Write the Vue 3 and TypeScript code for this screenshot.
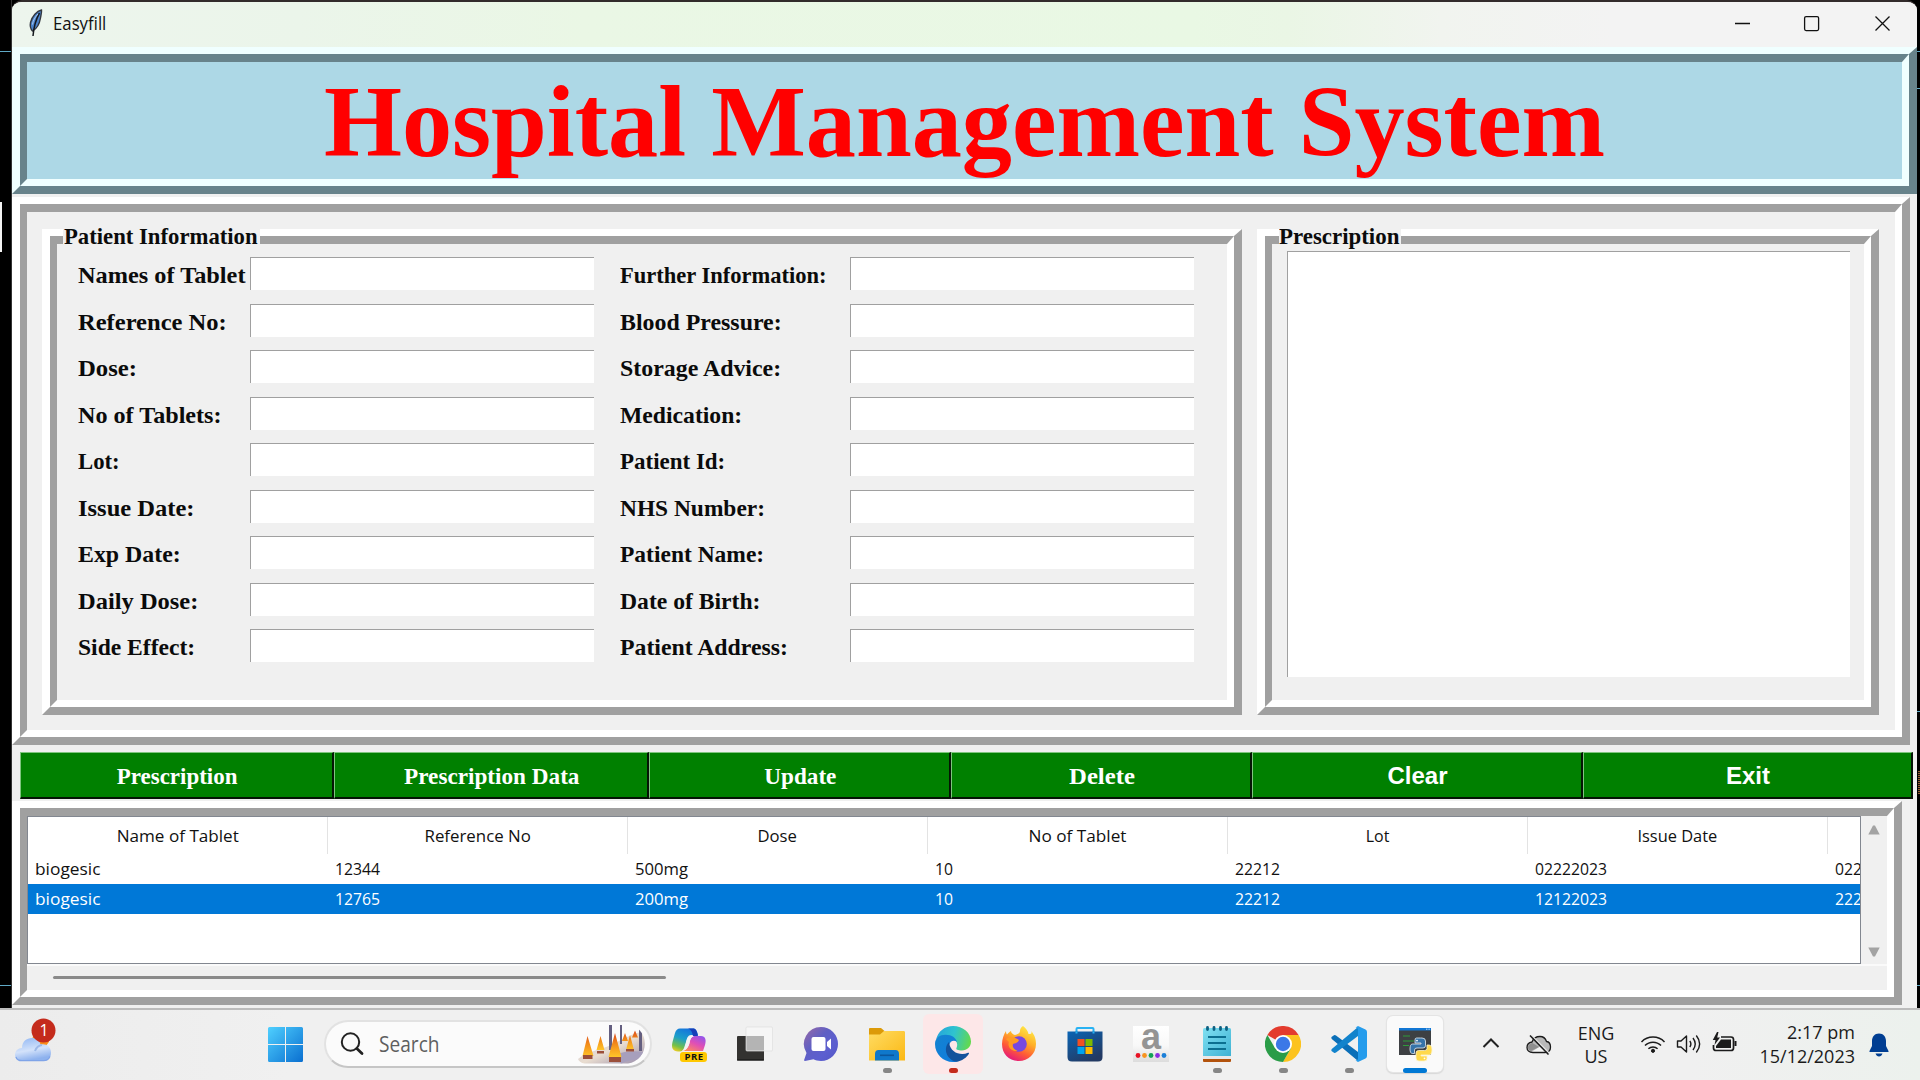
<script setup lang="ts">
interface Caption {
  text: string
  stretch: number
}

interface FieldPair {
  left: Caption
  right: Caption
}

interface ActionButton {
  label: string
  width: number
  stretch: number
  sans?: boolean
}

const fields: FieldPair[] = [
  { left: { text: 'Names of Tablet', stretch: 1.013 }, right: { text: 'Further Information:', stretch: 0.938 } },
  { left: { text: 'Reference No:', stretch: 1.022 }, right: { text: 'Blood Pressure:', stretch: 0.995 } },
  { left: { text: 'Dose:', stretch: 1.03 }, right: { text: 'Storage Advice:', stretch: 0.995 } },
  { left: { text: 'No of Tablets:', stretch: 1.006 }, right: { text: 'Medication:', stretch: 0.986 } },
  { left: { text: 'Lot:', stretch: 0.946 }, right: { text: 'Patient Id:', stretch: 0.957 } },
  { left: { text: 'Issue Date:', stretch: 1.022 }, right: { text: 'NHS Number:', stretch: 0.975 } },
  { left: { text: 'Exp Date:', stretch: 0.994 }, right: { text: 'Patient Name:', stretch: 0.979 } },
  { left: { text: 'Daily Dose:', stretch: 1.02 }, right: { text: 'Date of Birth:', stretch: 0.985 } },
  { left: { text: 'Side Effect:', stretch: 0.982 }, right: { text: 'Patient Address:', stretch: 0.99 } },
]

const buttons: ActionButton[] = [
  { label: 'Prescription', width: 314, stretch: 0.956 },
  { label: 'Prescription Data', width: 315, stretch: 0.966 },
  { label: 'Update', width: 302, stretch: 0.966 },
  { label: 'Delete', width: 301, stretch: 1.03 },
  { label: 'Clear', width: 331, stretch: 1, sans: true },
  { label: 'Exit', width: 330, stretch: 1, sans: true },
]

const columns: Caption[] = [
  { text: 'Name of Tablet', stretch: 1.006 },
  { text: 'Reference No', stretch: 0.99 },
  { text: 'Dose', stretch: 0.98 },
  { text: 'No of Tablet', stretch: 1.01 },
  { text: 'Lot', stretch: 0.94 },
  { text: 'Issue Date', stretch: 0.965 },
  { text: '', stretch: 1 },
]

const rows: string[][] = [
  ['biogesic', '12344', '500mg', '10', '22212', '02222023', '022'],
  ['biogesic', '12765', '200mg', '10', '22212', '12122023', '222'],
]
const selectedRow = 1

// Digits sit tighter than letters in the table font.
function cellStretch(value: string): number {
  if (/^[a-z]/.test(value)) return 1.02
  return /[a-z]/.test(value) ? 0.98 : 0.926
}

function stretched(factor: number): { transform: string } {
  return { transform: `scaleX(${factor})` }
}
</script>

<template>
  <div class="desktop">
    <div class="workspace">
      <div class="strip strip-left">
        <i class="wire wire-a"></i>
        <i class="wire wire-d"></i>
        <i class="chip"></i>
      </div>

      <div class="window">
        <header class="titlebar">
          <svg class="feather" width="16" height="30" viewBox="0 0 16 30">
            <path d="M13.500 2C9 3 4 8 2.500 14.500C1.800 18 2.500 21 4.500 23C8.500 21 11.500 16 12.500 10C13.200 6 13.800 4 13.500 2Z" fill="#4a82cb" stroke="#33373f" stroke-width="1.400" />
            <path d="M11.500 5C8 11 6 17 5 28" fill="none" stroke="#15181d" stroke-width="1.500" />
            <path d="M10 6C7 9 5 12.500 4.500 16.500" fill="none" stroke="#a9c9f0" stroke-width="1" />
          </svg>
          <span class="caption">Easyfill</span>
          <div class="controls">
            <svg width="160" height="20" viewBox="0 0 160 20" fill="none" stroke="#111" stroke-width="1.300">
              <path d="M3 9.500H18" />
              <rect x="72.600" y="2.600" width="14" height="14" rx="1.500" />
              <path d="M143.500 2.500L157.500 16.500M157.500 2.500L143.500 16.500" />
            </svg>
          </div>
        </header>

        <div class="ridge banner">
          <div class="groove"><h1>Hospital Management System</h1></div>
        </div>

        <div class="ridge data">
          <div class="groove data-body">
            <section class="ridge patient">
              <span class="legend legend-patient"><b>Patient Information</b></span>
              <div class="groove form">
                <template v-for="f in fields" :key="f.left.text">
                  <label :style="stretched(f.left.stretch)">{{ f.left.text }}</label>
                  <div class="entry"></div>
                  <label class="second" :style="stretched(f.right.stretch)">{{ f.right.text }}</label>
                  <div class="entry"></div>
                </template>
              </div>
            </section>

            <section class="ridge prescription">
              <span class="legend legend-rx"><b>Prescription</b></span>
              <div class="groove rx-body"><div class="entry textarea"></div></div>
            </section>
          </div>
        </div>

        <div class="actions">
          <button v-for="b in buttons" :key="b.label" :class="{ sans: b.sans }" :style="{ width: b.width + 'px' }">
            <span :style="stretched(b.stretch)">{{ b.label }}</span>
          </button>
        </div>

        <div class="ridge details">
          <div class="groove details-body">
            <div class="upper">
              <div class="tree">
                <div class="tree-row head">
                  <div v-for="(c, i) in columns" :key="i" class="cell"><span :style="stretched(c.stretch)">{{ c.text }}</span></div>
                </div>
                <div v-for="(r, i) in rows" :key="i" class="tree-row" :class="{ selected: i === selectedRow }">
                  <div v-for="(c, j) in r" :key="j" class="cell"><span :style="stretched(cellStretch(c))">{{ c }}</span></div>
                </div>
              </div>
              <div class="vscroll">
                <svg width="12" height="10" viewBox="0 0 12 10"><path d="M5 .5h2L11.700 9.500H.3Z" fill="#a3a3a3" /></svg>
                <svg width="12" height="10" viewBox="0 0 12 10"><path d="M.3.5h11.400L7 9.500H5Z" fill="#a3a3a3" /></svg>
              </div>
            </div>
            <div class="hscroll"><div class="thumb"></div></div>
          </div>
        </div>
      </div>

      <div class="strip strip-right">
        <i class="wire wire-a"></i>
        <i class="wire wire-b"></i>
        <i class="wire wire-c"></i>
        <i class="wire wire-d"></i>
        <i class="dots"></i>
      </div>
    </div>

    <footer class="taskbar">
      <div class="weather">
        <svg width="44" height="48" viewBox="0 0 44 48">
          <defs>
            <linearGradient id="cloud" x1="0" y1="0" x2="0.3" y2="1">
              <stop offset="0" stop-color="#8fb6f3" /><stop offset=".6" stop-color="#d3e2fa" /><stop offset="1" stop-color="#8eb2ee" />
            </linearGradient>
          </defs>
          <circle cx="27" cy="20.500" r="8.500" fill="#fb8c17" />
          <path d="M8 50.500C3.500 50.500 1 48 1 44.500C1 40.500 4 37.500 8 37.500C8 31 12.500 27.500 18 27.500C22.500 27.500 25.500 30 26.500 34C32 32.500 37 36 37 42C37 47 34 50.500 29.500 50.500Z" transform="translate(0 -7.500)" fill="url(#cloud)" />
          <path d="M2 39Q3 42.700 8 42.700H29.500Q34 42.700 36 38.500" fill="none" stroke="#7fa4e8" stroke-width="1.200" />
          <path d="M21 33Q23 27.500 28 27" fill="none" stroke="#9db9e9" stroke-width="2" />
          <circle cx="29.500" cy="12.500" r="12" fill="#c42b1c" />
        </svg>
        <span class="badge">1</span>
      </div>

      <svg class="start" width="35" height="35" viewBox="0 0 35 35">
        <defs>
          <linearGradient id="win" x1="0" y1="0" x2="1" y2="1">
            <stop offset="0" stop-color="#4fd0ff" /><stop offset="1" stop-color="#0a6fd0" />
          </linearGradient>
        </defs>
        <path d="M1.500 0H17V17H0V1.500Q0 0 1.500 0ZM18 0H33.500Q35 0 35 1.500V17H18ZM0 18H17V35H1.500Q0 35 0 33.500ZM18 18H35V33.500Q35 35 33.500 35H18Z" fill="url(#win)" />
      </svg>

      <div class="search">
        <svg class="lens" width="26" height="26" viewBox="0 0 26 26" fill="none" stroke="#222" stroke-linecap="round">
          <circle cx="11.500" cy="11" r="8.700" stroke-width="2" /><path d="M17.800 17.500L23 22.500" stroke-width="2.800" />
        </svg>
        <span class="placeholder">Search</span>
        <svg class="art" width="74" height="42" viewBox="0 0 74 42">
          <defs>
            <linearGradient id="flame" x1="0" y1="0" x2="0" y2="1">
              <stop offset="0" stop-color="#d9481c" /><stop offset=".45" stop-color="#f28a1a" /><stop offset="1" stop-color="#ffc629" />
            </linearGradient>
            <linearGradient id="snow" x1="0" y1="0" x2="1" y2="1">
              <stop offset="0" stop-color="#c6c0d6" /><stop offset=".5" stop-color="#e9ddd0" /><stop offset="1" stop-color="#8a7fa3" />
            </linearGradient>
            <clipPath id="pill"><path d="M0 1H52A20 20 0 0 1 52 40.500H0Z" /></clipPath>
          </defs>
          <g clip-path="url(#pill)">
            <path d="M2 36C12 28 24 27 35 22C48 16 60 8 74 8V42H16C8 42 3 39 2 36Z" fill="url(#snow)" />
            <path d="M40 31Q56 26 73 30V37Q55 35 45 41Z" fill="#a79fbc" />
            <path d="M33 2h3v25h-3zM44 2h2v19h-2zM63 5h3v23h-3zM69 10h2v10h-2z" fill="#645f80" />
            <path d="M49 10l3 8h-6zM59 7.500l3 7h-6zM54 12l4 15h-8zM24.500 13l4 14h-8z" fill="url(#flame)" />
            <path d="M11.500 13l6 20h-11zM39 10l6.500 24h-13z" fill="url(#flame)" />
            <path d="M7 32h9.500v4H7zM33 34h12v5H33zM21 28h7v2.500h-7zM50 26h8v2.500h-8z" fill="#9b4f3a" />
          </g>
        </svg>
      </div>

      <nav class="apps">
        <div class="app">
          <svg viewBox="0 0 36 36">
            <defs>
              <linearGradient id="copA" x1="0.600" y1="0" x2="0.200" y2="1"><stop offset="0" stop-color="#1573dd" /><stop offset=".45" stop-color="#1b9fc9" /><stop offset=".8" stop-color="#75c047" /><stop offset="1" stop-color="#e8cc24" /></linearGradient>
              <linearGradient id="copB" x1="0.900" y1="0" x2="0.200" y2="1"><stop offset="0" stop-color="#8d55ef" /><stop offset=".5" stop-color="#e04fb5" /><stop offset="1" stop-color="#ff8d5b" /></linearGradient>
            </defs>
            <path d="M9 2.500H22C25 2.500 26 5 27 9H20C17 9 16 12 15 16L13 22C12 25 10 25.500 7 25.500C2 25.500 0 22 1.500 16L4 7C5 4 6.500 2.500 9 2.500Z" fill="url(#copA)" />
            <path d="M19 2.500H22C25 2.500 26 5 27 10H22C21 6 20.500 4 17 2.500Z" fill="#163fb8" />
            <path d="M24 10H30C34.500 10 35.500 14 34 19L32 25H11C15 25 17.500 21 18.500 17C19.500 12 21 10 24 10Z" fill="url(#copB)" />
            <path d="M20 10H24C21 10 19.500 12 18.500 17C17.500 21 15 25 11 25C13.500 24 14 21 15 17C16 13 17 10 20 10Z" fill="#f3f3f3" />
            <rect x="9" y="26" width="27" height="10" rx="3" fill="#ffc800" />
          </svg>
          <span class="pre">PRE</span>
        </div>
        <div class="app">
          <svg viewBox="0 0 36 36"><rect x="0" y="10" width="27" height="24.500" rx="1" fill="#333230" /><rect x="9" y="1" width="26.500" height="24" rx="1" fill="#f6f6f6" stroke="#dedede" stroke-width=".7" /><path d="M9.400 10H27V24.600H9.400Z" fill="#b4b4b4" /><path d="M0 34H27" stroke="#111" /></svg>
        </div>
        <div class="app">
          <svg viewBox="0 0 36 36">
            <defs><linearGradient id="chat" x1="0" y1="0" x2="1" y2="1"><stop offset="0" stop-color="#9a6aa5" /><stop offset=".4" stop-color="#5f5fc4" /><stop offset=".7" stop-color="#5c5fd0" /><stop offset="1" stop-color="#5355c3" /></linearGradient></defs>
            <path d="M18 1A17 17 0 0 1 18 35C15 35 12.500 34.300 10.500 33.300L2 35Q.8 35 1.200 33.700L3.500 27A17 17 0 0 1 18 1Z" fill="url(#chat)" />
            <rect x="8.500" y="11" width="14" height="14" rx="2" fill="#fff" /><path d="M24 16L28 12.500V23.500L24 20Z" fill="#fff" />
          </svg>
        </div>
        <div class="app">
          <svg viewBox="0 0 36 36">
            <defs><linearGradient id="fold" x1="0" y1="0" x2="1" y2="1"><stop offset="0" stop-color="#ffdc63" /><stop offset="1" stop-color="#fbb814" /></linearGradient></defs>
            <path d="M0 3Q0 2 1 2H12L15.500 5H20V12H0Z" fill="#dc9a08" />
            <path d="M0 8.500H11L15 5H34.500Q36 5 36 6.200V34.500H0Z" fill="url(#fold)" />
            <path d="M6 34.500V28Q6 24 9.500 24H26.500Q30 24 30 28V34.500Z" fill="#0f78cb" /><path d="M11 29.300H25" stroke="#0b569d" stroke-width="1.600" />
          </svg>
          <i class="dot"></i>
        </div>
        <div class="app attention">
          <svg viewBox="0 0 36 36">
            <defs>
              <linearGradient id="edgeA" x1="0" y1="0.300" x2="1" y2="0.500"><stop offset="0" stop-color="#25a5dc" /><stop offset=".5" stop-color="#2fc3cf" /><stop offset="1" stop-color="#62d94f" /></linearGradient>
              <linearGradient id="edgeB" x1="0" y1="0" x2="1" y2="1"><stop offset="0" stop-color="#1583cf" /><stop offset="1" stop-color="#0d7be0" /></linearGradient>
            </defs>
            <path d="M1 14C3 5 10 0 18 0C28 0 36 7 36 15.500C36 21 32 24.500 27 24.500C23 24.500 20.500 23.500 21.500 22C24 17 20 11 12 10C7 9.500 3 11 1 14Z" fill="url(#edgeA)" />
            <path d="M0 18C0 12 5 8.800 10.500 8.800C17 8.800 21 12 22 16C19 13.500 15 15 14.300 19C13.500 27 20 33 25 34.500C22 36 20 36 18 36C8 36 0 28 0 18Z" fill="url(#edgeB)" />
            <path d="M14 16C8 22 11 33 21 35.800C27 35 32 31.500 34 27.500C34.300 26.700 33.500 26.500 33 26.800C26 30 15 27 14 16Z" fill="#13529c" />
          </svg>
          <i class="dot red"></i>
        </div>
        <div class="app">
          <svg viewBox="0 0 36 36">
            <defs><linearGradient id="fox" x1="0.800" y1="0" x2="0.300" y2="1"><stop offset="0" stop-color="#fff04a" /><stop offset=".4" stop-color="#ffae27" /><stop offset=".7" stop-color="#ff5b36" /><stop offset="1" stop-color="#e3167f" /></linearGradient></defs>
            <path d="M22 0C25 2 27 5 27.500 8C31 8 31 7 30 5C34 9 35 14 35 18C35 28 27 35 18 35C8 35 1 28 1 18C1 13 3 8 5 5C5 7 5.500 8 6 8.500C7 7 9 5.500 10 5C10 7 12 8.500 14 9C17 8 19 7 19 5C19 3 20 1 22 0Z" fill="url(#fox)" />
            <circle cx="18" cy="18" r="7.800" fill="#7748e0" />
            <path d="M5 13C9 10 14 11 18 14C17 17 14 17 12 18C11 21 13 24 17 25C10 26 6 20 8 16Z" fill="#ff9b23" />
          </svg>
        </div>
        <div class="app">
          <svg viewBox="0 0 36 36">
            <defs><linearGradient id="store" x1="0" y1="0" x2="0.600" y2="1"><stop offset="0" stop-color="#0a65b5" /><stop offset="1" stop-color="#233a63" /></linearGradient></defs>
            <path d="M9.500 8V3Q9.500 2 10.500 2H25.500Q26.500 2 26.500 3V8" fill="none" stroke="#28b2f3" stroke-width="2" />
            <path d="M.5 5.500H35.500V31Q35.500 35.500 31 35.500H5Q.5 35.500 .5 31Z" fill="url(#store)" />
            <path d="M9.500 7.500V5.500M26.500 7.500V5.500" stroke="#28b2f3" stroke-width="2" />
            <path d="M10.500 13h7v7h-7z" fill="#f25022" /><path d="M18.500 13h7v7h-7z" fill="#7fba00" /><path d="M10.500 21h7v7h-7z" fill="#00a4ef" /><path d="M18.500 21h7v7h-7z" fill="#ffb900" />
          </svg>
        </div>
        <div class="app">
          <svg viewBox="0 0 36 36">
            <defs><linearGradient id="pad" x1="0" y1="0" x2="0" y2="1"><stop offset="0" stop-color="#fff" /><stop offset=".55" stop-color="#f8f8f8" /><stop offset="1" stop-color="#dcdcdc" /></linearGradient></defs>
            <rect width="36" height="36" fill="url(#pad)" />
            <circle cx="5" cy="29.500" r="2.400" fill="#e81123" /><circle cx="11.500" cy="29.500" r="2.400" fill="#f7931e" /><circle cx="18" cy="29.500" r="2.400" fill="#12a156" /><circle cx="24.500" cy="29.500" r="2.400" fill="#8a2be2" /><circle cx="31" cy="29.500" r="2.400" fill="#1a7fd8" />
          </svg>
          <span class="letter">a</span>
        </div>
        <div class="app">
          <svg viewBox="0 0 36 36">
            <defs><linearGradient id="note" x1="0" y1="0" x2="1" y2="1"><stop offset="0" stop-color="#7fe0f2" /><stop offset="1" stop-color="#3fb2d3" /></linearGradient></defs>
            <rect x="4" y="30" width="28" height="6" rx="1" fill="#b3530d" /><rect x="4" y="28" width="28" height="5" fill="#e9e9e9" />
            <path d="M4 3.500Q4 2 5.500 2H30.500Q32 2 32 3.500V30H4Z" fill="url(#note)" />
            <path d="M8.500 1.500v2M15 1.500v2M21.500 1.500v2M27.500 1.500v2" stroke="#0d5f80" stroke-width="2.800" stroke-linecap="round" />
            <path d="M9 11H27M9 17H27M9 23H27" stroke="#0b6f90" stroke-width="1.900" />
          </svg>
          <i class="dot"></i>
        </div>
        <div class="app">
          <svg viewBox="0 0 36 36">
            <path d="M18 18L2.400 9A18 18 0 0 1 33.600 9Z" fill="#e33b2e" />
            <path d="M18 9H33.600A18 18 0 0 1 18 36L25.800 22.500Z" fill="#fcc31e" />
            <path d="M2.400 9A18 18 0 0 0 18 36L25.800 22.500L18 20L10.200 22.500Z" fill="#2a9c48" />
            <circle cx="18" cy="18" r="9" fill="#fff" /><circle cx="18" cy="18" r="7.200" fill="#3b78e7" />
          </svg>
          <i class="dot"></i>
        </div>
        <div class="app">
          <svg viewBox="0 0 36 36">
            <path d="M0.500 11L3 9.200Q4 8.600 5 9.400L27 26V35L.8 13Q0 12 .5 11Z" fill="#0b6fb8" />
            <path d="M.5 25L3 26.800Q4 27.400 5 26.600L27 10V1L.8 23Q0 24 .5 25Z" fill="#1283cc" />
            <path d="M27 0L34.500 3.500Q36 4.300 36 6V30Q36 31.700 34.500 32.500L27 36L24.500 34.500Q27 34.500 27 32V4Q27 1.500 24.500 1.500Z" fill="#259cec" />
          </svg>
          <i class="dot"></i>
        </div>
        <div class="app active">
          <svg viewBox="0 0 36 36">
            <path d="M2 2H34V29H2Z" fill="#3d4043" /><path d="M2 2H34V4.500H2Z" fill="#1277d4" /><path d="M29 3.200H33" stroke="#bfe0ff" stroke-width="1" stroke-dasharray="1 .6" />
            <path d="M6 10H13M6 15H17M6 19.500H12" stroke="#2f9a3a" stroke-width="1" />
            <path d="M23.500 12H19.500Q18 12 18 14V17H24V18H15.500Q13 18 13 23Q13 27.500 15.500 27.500H17.500V24Q17.500 22 20 22H26Q28.500 22 28.500 19.500V15Q28.500 12 25 12Z" fill="#3673a9" stroke="#e6edf4" stroke-width=".8" />
            <path d="M24.500 35H27Q30 35 30 32.500V30H24V29H31.500Q35 29 35 24Q35 19 32 19H30V22.500Q30 24.500 27.500 24.500H21.500Q19 24.500 19 27V32Q19 35 22 35Z" fill="#ffd94c" stroke="#fdf4cc" stroke-width=".8" />
            <circle cx="20" cy="14.600" r=".9" fill="#fff" /><circle cx="27.500" cy="32.300" r=".9" fill="#fff" />
          </svg>
          <i class="dot blue"></i>
        </div>
      </nav>

      <div class="tray">
        <svg class="chevron" width="18" height="12" viewBox="0 0 18 12" fill="none" stroke="#222" stroke-width="2"><path d="M1.500 10L9 2.500L16.500 10" /></svg>
        <svg class="sync" width="26" height="20" viewBox="0 0 26 20">
          <path d="M7 17.500C3 17.500 1 15.500 1 12.500C1 9.500 3 7.500 6 7C7.500 3 10.500 1.500 14 1.500C17.500 1.500 19.500 3.500 20.500 6.500C23 6.800 24.500 9 24.500 12C24.500 15.500 22.500 17.500 19 17.500Z" fill="#b9b9b9" stroke="#1b1b1b" stroke-width="1.300" />
          <path d="M6 16.500L14 11.500L21 16.500Z" fill="#f5f5f5" /><path d="M2 12Q3 8.500 6.500 8L13 12L5 16Q2 15.500 2 12Z" fill="#8e8e8e" />
          <path d="M5.500 .5L23.500 18.500" stroke="#e4e4e4" stroke-width="1.500" /><path d="M4 .5L22.500 19.500" stroke="#1b1b1b" stroke-width="1.500" />
        </svg>
        <div class="lang"><span>ENG</span><span>US</span></div>
        <svg class="wifi" width="26" height="20" viewBox="0 0 26 20" fill="none" stroke="#1b1b1b" stroke-width="1.500">
          <path d="M1.500 8A16 16 0 0 1 24.500 8M5 11.500A11.300 11.300 0 0 1 21 11.500M8.400 14.800A6.600 6.600 0 0 1 17.600 14.800" /><circle cx="13" cy="16.800" r="1.600" fill="#1b1b1b" stroke-width="1" />
        </svg>
        <svg class="speaker" width="26" height="22" viewBox="0 0 26 22" fill="none" stroke="#1b1b1b" stroke-width="1.400">
          <path d="M1.500 8V14H5L10.500 19V3L5 8Z" stroke-linejoin="round" /><path d="M13.800 8Q16 11 13.800 14M17 5Q21.500 11 17 17M20.300 2.500Q27 11 20.300 19.500" />
        </svg>
        <svg class="battery" width="26" height="22" viewBox="0 0 26 22">
          <path d="M9 5H19Q21.500 5 21.500 7.500V16Q21.500 18.500 19 18.500H4Q1.500 18.500 1.500 16V13" fill="none" stroke="#1b1b1b" stroke-width="1.700" />
          <path d="M9 7.500H19V16H4V14Z" fill="#1b1b1b" /><path d="M22.500 9H24.500V14H22.500Z" fill="#1b1b1b" />
          <path d="M5 0L.8 8H3.500L2.500 13L8 5.500H5.200L6.500 0Z" fill="#1b1b1b" />
        </svg>
        <div class="clock"><span>2:17 pm</span><span>15/12/2023</span></div>
        <svg class="bell" width="20" height="24" viewBox="0 0 20 24">
          <path d="M10 .5C14.500 .5 17 4 17 8V13L19.500 18V19H.5V18L3 13V8C3 4 5.500 .5 10 .5Z" fill="#003e92" /><path d="M6.500 20.500H13.500Q12.500 23.500 10 23.500Q7.500 23.500 6.500 20.500Z" fill="#003e92" />
        </svg>
      </div>
    </footer>
  </div>
</template>

<style>
body {
  overflow: hidden;
}
</style>

<style scoped>
.desktop {
  width: 1920px;
  height: 1080px;
  display: flex;
  flex-direction: column;
  overflow: hidden;
  background: #000;
  font-family: "Open Sans", "Noto Sans", sans-serif;
  box-sizing: border-box;
}
.desktop *,
.desktop *::before {
  box-sizing: border-box;
}
.workspace {
  display: flex;
  height: 1008px;
}
.strip {
  position: relative;
  background: #000;
  flex: none;
}
.strip-left {
  width: 12px;
  border-right: 1px solid #333;
}
.strip-right {
  width: 3px;
}
.wire {
  position: absolute;
  left: 0;
  right: 0;
  height: 1px;
  background: #5fa9c6;
}
.wire-a {
  top: 51px;
}
.wire-b {
  top: 88px;
}
.wire-c {
  top: 711px;
}
.wire-d {
  top: 985px;
}
.chip {
  position: absolute;
  left: 0;
  top: 202px;
  width: 2px;
  height: 50px;
  background: #f4f4f4;
}
.dots {
  position: absolute;
  left: 1px;
  top: 771px;
  width: 2px;
  height: 23px;
  background: repeating-linear-gradient(#9a5c2c 0 1px, #111 1px 2px);
}
.window {
  width: 1905px;
  height: 1008px;
  border-top: 2px solid #322b2b;
  border-radius: 10px 10px 0 0;
  background: #f0f0f0;
  overflow: hidden;
}
.titlebar {
  height: 45px;
  display: flex;
  align-items: center;
  background: linear-gradient(90deg, #edf5ed 0, #ebf5ea 15%, #eaf7e5 30%, #e9f8e4 62%, #eaf6e5 67%, #f1f4ef 75%, #f3f3f3 84%);
}
.feather {
  margin: -3px 0 0 16px;
}
.caption {
  margin: -3px 0 0 9px;
  font-size: 17.500px;
  line-height: 24px;
  color: #111;
  transform: scaleX(0.958);
  transform-origin: left;
}
.controls {
  margin: -2px 25px 0 auto;
  display: flex;
}

/* Two nested solid borders give the raised-then-sunken frame edge. */
.ridge {
  --hi: #fff;
  --lo: #a0a0a0;
  position: relative;
  border-style: solid;
  border-width: 7px 8px 8px;
  border-color: var(--hi) var(--lo) var(--lo) var(--hi);
}
.groove {
  height: 100%;
  border-style: solid;
  border-width: 8px 7px 7px;
  border-color: var(--lo) var(--hi) var(--hi) var(--lo);
}
.banner {
  --hi: #f0ffff;
  --lo: #68838b;
  height: 147px;
  background: #add8e6;
}
h1 {
  margin: 0;
  text-align: center;
  font: bold 102px/120px "Liberation Serif", serif;
  color: #f00;
  white-space: nowrap;
  transform: scaleX(0.983);
}
.data {
  margin-top: 3px;
  width: 1898px;
  height: 548px;
}
.data-body {
  display: flex;
  gap: 15px;
  padding: 17px 0 0 15px;
}
.patient {
  width: 1200px;
  height: 486px;
}
.prescription {
  width: 622px;
  height: 486px;
}
.legend {
  position: absolute;
  top: -9px;
  height: 24px;
  background: #f0f0f0;
  font: bold 24px/27px "Liberation Serif", serif;
  color: #0b0b0b;
  white-space: nowrap;
}
.legend b {
  display: block;
  margin-top: -4px;
  transform: scaleX(0.946);
  transform-origin: left;
}
.legend-patient {
  left: 13px;
  width: 197px;
  padding-left: 1px;
}
.legend-rx {
  left: 14px;
  width: 122px;
}
.legend-rx b {
  transform: scaleX(0.954);
}
.form {
  display: grid;
  grid-template-columns: 172px 344px 256px 344px;
  grid-auto-rows: 33px;
  row-gap: 13.550px;
  align-content: start;
  padding: 13px 0 0 21px;
}
label {
  justify-self: start;
  font: bold 24px/36px "Liberation Serif", serif;
  color: #0b0b0b;
  white-space: nowrap;
  transform-origin: left;
}
.second {
  margin-left: 26px;
}
.entry {
  background: #fff;
  border-top: 1px solid #a0a0a0;
  border-left: 1px solid #a0a0a0;
}
.rx-body {
  padding: 7px 0 0 15px;
}
.textarea {
  width: 563px;
  height: 426px;
}
.actions {
  display: flex;
  margin-top: 7px;
  padding-left: 8px;
  height: 47px;
}
button {
  flex: none;
  margin: 0;
  padding: 1px 0 0 1px;
  background: #008000;
  border-style: solid;
  border-width: 1px 2px 2px 1px;
  border-color: #7fc57f #051405 #051405 #7fc57f;
  color: #fff;
  font: bold 24px/40px "Liberation Serif", serif;
}
button span {
  display: inline-block;
}
button.sans {
  font-family: "Liberation Sans", sans-serif;
  line-height: 39px;
}
.details {
  margin-top: 2px;
  width: 1890px;
  height: 204px;
}
.upper {
  display: flex;
  height: 148px;
}
.tree {
  width: 1834px;
  border: 1px solid #828790;
  background: #fff;
  overflow: hidden;
}
.tree-row {
  display: flex;
  width: 2100px;
  height: 30px;
  font-size: 17px;
  line-height: 29px;
  color: #111;
}
.cell {
  width: 300px;
  padding-left: 7px;
  white-space: nowrap;
}
.cell span {
  display: inline-block;
  transform-origin: left;
}
.head {
  height: 37px;
  line-height: 37px;
}
.head .cell {
  padding: 0;
  text-align: center;
  border-right: 1px solid #e3e3e3;
}
.head .cell span {
  transform-origin: center;
}
.selected {
  background: #0078d7;
  color: #fff;
}
.vscroll {
  width: 26px;
  padding: 9px 0 7px;
  display: flex;
  flex-direction: column;
  align-items: center;
  justify-content: space-between;
}
.hscroll {
  height: 25px;
  border-top: 2px solid #fafafa;
  padding: 10px 0 0 26px;
}
.thumb {
  width: 613px;
  height: 3px;
  border-radius: 2px;
  background: #8a8a8a;
}

.taskbar {
  height: 72px;
  border-top: 2px solid #bcbcbc;
  display: flex;
  align-items: flex-start;
  background: linear-gradient(90deg, #ececec, #f0f0f0 15%, #f0f0f0 88%, #ecf1ed);
}
.taskbar > * {
  flex: none;
}
.weather {
  position: relative;
  width: 44px;
  margin: 8px 0 0 14px;
}
.badge {
  position: absolute;
  left: 18px;
  top: 0;
  width: 24px;
  text-align: center;
  font-size: 16px;
  line-height: 24px;
  color: #fff;
}
.start {
  margin: 17px 0 0 210px;
}
.search {
  position: relative;
  display: flex;
  align-items: center;
  width: 328px;
  height: 48px;
  margin: 10px 0 0 21px;
  border: 2px solid #e2e2e2;
  border-bottom-color: #c6c6c6;
  border-radius: 24px;
  background: #fbfbfb;
}
.lens {
  margin-left: 13px;
}
.placeholder {
  margin-left: 14px;
  font-size: 21px;
  line-height: 30px;
  color: #5f5f5f;
  transform: scaleX(0.910);
  transform-origin: left;
}
.art {
  margin-left: auto;
}
.apps {
  display: flex;
  margin-left: 4px;
}
.app {
  position: relative;
  width: 60px;
  height: 60px;
  margin: 4px 3px 0;
  padding: 12px 12px 0;
  border-radius: 6px;
}
.app svg {
  display: block;
  width: 36px;
  height: 36px;
}
.dot {
  position: absolute;
  left: 26px;
  top: 54px;
  width: 9px;
  height: 5px;
  border-radius: 2.500px;
  background: #868686;
}
.dot.red {
  background: #c42b1c;
}
.dot.blue {
  left: 18px;
  width: 24px;
  background: #0078d4;
}
.attention {
  background: #fde7e8;
}
.active {
  width: 56px;
  height: 56px;
  margin: 6px 5px 0;
  padding: 10px 10px 0;
  background: #fafafa;
  box-shadow: 0 0 0 1px #e4e4e4, 0 1px 1px 1px #d8d8d8;
}
.active .dot {
  left: 16px;
  top: 52px;
}
.pre {
  position: absolute;
  left: 22px;
  top: 37px;
  width: 26px;
  text-align: center;
  font-weight: bold;
  font-size: 9.500px;
  letter-spacing: 0.500px;
  line-height: 12px;
  color: #111;
}
.letter {
  position: absolute;
  left: 12px;
  top: 6px;
  width: 36px;
  text-align: center;
  font: bold 36px/34px "Liberation Sans", sans-serif;
  color: #949494;
}
.tray {
  display: flex;
  align-items: flex-start;
  color: #1b1b1b;
  font-size: 18px;
  margin-left: 34px;
}
.chevron {
  margin-top: 27px;
}
.sync {
  margin: 25px 0 0 26px;
}
.lang {
  width: 60px;
  margin: 12px 0 0 14px;
  display: flex;
  flex-direction: column;
  align-items: center;
  line-height: 23px;
}
.wifi {
  margin: 24px 0 0 14px;
}
.speaker {
  margin: 23px 0 0 10px;
}
.battery {
  margin: 22px 0 0 10px;
}
.clock {
  width: 117px;
  margin-top: 10px;
  display: flex;
  flex-direction: column;
  align-items: flex-end;
  line-height: 24px;
}
.bell {
  margin: 23px 0 0 14px;
}
</style>
